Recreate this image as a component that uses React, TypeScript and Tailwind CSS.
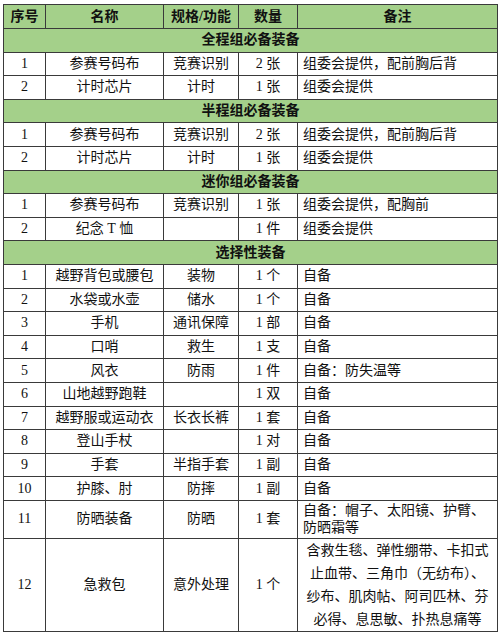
import React from 'react';

type Row = [string, string, string, string, React.ReactNode];

const sections: { title: string; rows: Row[] }[] = [
  {
    title: '全程组必备装备',
    rows: [
      ['1', '参赛号码布', '竞赛识别', '2 张', '组委会提供，配前胸后背'],
      ['2', '计时芯片', '计时', '1 张', '组委会提供'],
    ],
  },
  {
    title: '半程组必备装备',
    rows: [
      ['1', '参赛号码布', '竞赛识别', '2 张', '组委会提供，配前胸后背'],
      ['2', '计时芯片', '计时', '1 张', '组委会提供'],
    ],
  },
  {
    title: '迷你组必备装备',
    rows: [
      ['1', '参赛号码布', '竞赛识别', '1 张', '组委会提供，配胸前'],
      ['2', '纪念 T 恤', '', '1 件', '组委会提供'],
    ],
  },
];

const optional: Row[] = [
  ['1', '越野背包或腰包', '装物', '1 个', '自备'],
  ['2', '水袋或水壶', '储水', '1 个', '自备'],
  ['3', '手机', '通讯保障', '1 部', '自备'],
  ['4', '口哨', '救生', '1 支', '自备'],
  ['5', '风衣', '防雨', '1 件', '自备：防失温等'],
  ['6', '山地越野跑鞋', '', '1 双', '自备'],
  ['7', '越野服或运动衣', '长衣长裤', '1 套', '自备'],
  ['8', '登山手杖', '', '1 对', '自备'],
  ['9', '手套', '半指手套', '1 副', '自备'],
  ['10', '护膝、肘', '防摔', '1 副', '自备'],
];

const cell = 'border border-[#3a3a3a] text-center align-middle p-0';

const DataRow: React.FC<{ row: Row; h?: string; noteClass?: string }> = ({ row, h = 'h-[23.6px]', noteClass }) => (
  <tr className={h}>
    <td className={cell}>{row[0]}</td>
    <td className={cell}>{row[1]}</td>
    <td className={cell}>{row[2]}</td>
    <td className={cell}>{row[3]}</td>
    <td className={noteClass ?? 'border border-[#3a3a3a] text-left align-middle pl-[5px]'}>{row[4]}</td>
  </tr>
);

const SectionRow: React.FC<{ title: string }> = ({ title }) => (
  <tr className="h-[23.6px] bg-[#a4d08a]">
    <td colSpan={5} className="border border-[#3a3a3a] text-center align-middle font-bold p-0">
      {title}
    </td>
  </tr>
);

export default function App() {
  return (
    <div className="w-[500px] h-[634px] bg-white pl-[3px] pt-[4px]">
      <table
        className="table-fixed border-collapse w-[494px] text-[14px] leading-[18px] text-[#111]"
        style={{ fontFamily: '"Liberation Serif", "Noto Sans CJK SC", serif' }}
      >
        <colgroup>
          <col className="w-[42px]" />
          <col className="w-[118px]" />
          <col className="w-[75px]" />
          <col className="w-[59px]" />
          <col className="w-[200px]" />
        </colgroup>
        <tbody>
          <tr className="h-[24px] bg-[#a4d08a] font-bold">
            <td className={cell}>序号</td>
            <td className={cell}>名称</td>
            <td className={cell}>规格/功能</td>
            <td className={cell}>数量</td>
            <td className={cell}>备注</td>
          </tr>
          {sections.map((s) => (
            <React.Fragment key={s.title}>
              <SectionRow title={s.title} />
              {s.rows.map((r) => (
                <DataRow key={s.title + r[0]} row={r} />
              ))}
            </React.Fragment>
          ))}
          <SectionRow title="选择性装备" />
          {optional.map((r) => (
            <DataRow key={r[0]} row={r} />
          ))}
          <DataRow
            h="h-[38px]"
            row={[
              '11',
              '防晒装备',
              '防晒',
              '1 套',
              <>
                自备：帽子、太阳镜、护臂、
                <br />
                防晒霜等
              </>,
            ]}
            noteClass="border border-[#3a3a3a] text-left align-middle pl-[5px] leading-[17px]"
          />
          <DataRow
            h="h-[93px]"
            row={[
              '12',
              '急救包',
              '意外处理',
              '1 个',
              <>
                含救生毯、弹性绷带、卡扣式
                <br />
                止血带、三角巾（无纺布）、
                <br />
                纱布、肌肉帖、阿司匹林、芬
                <br />
                必得、息思敏、扑热息痛等
              </>,
            ]}
            noteClass="border border-[#3a3a3a] text-center align-middle leading-[23px] p-0"
          />
        </tbody>
      </table>
    </div>
  );
}
